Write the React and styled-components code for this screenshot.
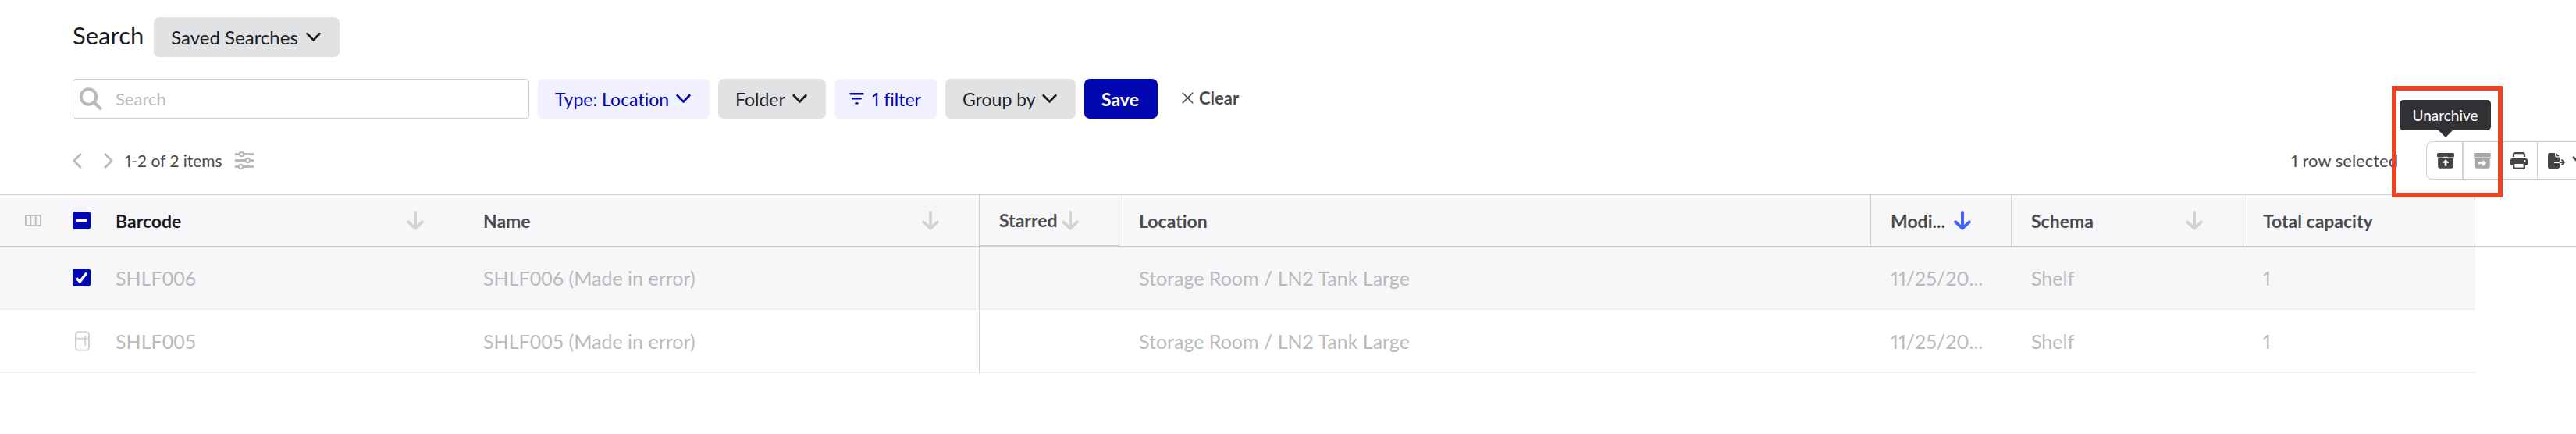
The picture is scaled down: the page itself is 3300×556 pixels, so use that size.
import React, { useState } from "react";
import styled, { createGlobalStyle } from "styled-components";

const GlobalStyle = createGlobalStyle`
  *, *::before, *::after { box-sizing: border-box; }
  body {
    margin: 0;
    background: #fff;
    color: #4a4b4d;
    font-family: Lato, "Open Sans", sans-serif;
    font-variant-ligatures: none;
    font-variant-numeric: proportional-nums;
  }
  button, input { font: inherit; font-variant-ligatures: none; font-variant-numeric: proportional-nums; }
  svg { flex: none; }
`;

const Page = styled.main`
  overflow: hidden;
  padding-bottom: 78px;
`;

const Controls = styled.div`
  display: flex;
  flex-direction: column;
  gap: 28px;
  padding: 22px 0 18px 93px;
`;

const Bar = styled.div`
  display: flex;
  align-items: center;
  height: 51px;
  gap: ${(p) => p.$gap || 11}px;
`;

const Title = styled.h1`
  margin: 0;
  padding-bottom: 6px;
  color: #1b1c1f;
  font-size: 31px;
  font-weight: 400;
  line-height: 36px;
`;

const tones = {
  grey: ["#e1e2e4", "#1b1c1f"],
  tint: ["#f0f0fe", "#0006b0"],
  primary: ["#0006b0", "#ffffff"],
};

const Button = styled.button`
  display: flex;
  align-items: center;
  justify-content: space-between;
  flex: none;
  width: ${(p) => p.$width}px;
  height: 51px;
  padding: 0 ${(p) => p.$end || 24}px 0 ${(p) => p.$start || 22}px;
  border: 0;
  border-radius: 7px;
  background: ${(p) => tones[p.$tone][0]};
  color: ${(p) => tones[p.$tone][1]};
  font-size: ${(p) => p.$size || 23}px;
  font-weight: ${(p) => (p.$tone === "primary" ? 700 : 400)};
  white-space: nowrap;
  cursor: pointer;
`;

const SearchField = styled.label`
  display: flex;
  align-items: center;
  gap: 17px;
  width: 585px;
  height: 51px;
  padding: 0 7px;
  border: 1px solid #cfcfd1;
  border-radius: 4px;
`;

const SearchInput = styled.input`
  flex: 1;
  min-width: 0;
  padding: 0;
  border: 0;
  outline: 0;
  background: transparent;
  font-size: 22px;
  &::placeholder { color: #b9babc; opacity: 1; }
`;

const ClearButton = styled.button`
  display: flex;
  align-items: center;
  gap: 7px;
  margin-left: 20px;
  padding: 0 0 2px;
  border: 0;
  background: none;
  color: #4a4b4d;
  font-size: 22px;
  font-weight: 700;
  cursor: pointer;
`;

const IconButton = styled.button`
  display: flex;
  padding: 0;
  border: 0;
  background: none;
  cursor: pointer;
`;

const Pager = styled.div`
  display: flex;
  align-items: center;
  gap: 28px;
`;

const Count = styled.span`
  font-size: ${(p) => (p.$large ? 22 : 21)}px;
  white-space: nowrap;
`;

const Selection = styled.div`
  display: flex;
  align-items: center;
  gap: 36px;
  margin: 0 -25px 0 auto;
`;

const Actions = styled.div`
  position: relative;
  display: flex;
  height: 51px;
  padding: 1px 0;
`;

const Action = styled.button`
  display: flex;
  align-items: center;
  justify-content: flex-start;
  gap: 9px;
  width: ${(p) => (p.$wide ? 75 : p.$first ? 48 : 47)}px;
  padding: 0 0 0 13px;
  border: 1px solid #cfcfd1;
  border-left-width: ${(p) => (p.$first || p.$wide ? 1 : 0)}px;
  border-right-width: ${(p) => (p.$first ? 2 : p.$wide ? 1 : 0)}px;
  border-radius: ${(p) => (p.$first ? "8px 0 0 8px" : p.$wide ? "0 8px 8px 0" : "0")};
  background: #fff;
  color: ${(p) => (p.disabled ? "#a7a7aa" : "#454547")};
  cursor: pointer;
`;

const Highlight = styled.div`
  position: absolute;
  top: -70px;
  left: -44px;
  width: 142px;
  height: 143px;
  border: 6px solid #ea4424;
  pointer-events: none;
`;

const Tooltip = styled.div`
  position: absolute;
  top: -52px;
  left: -34px;
  width: 117px;
  border-radius: 5px;
  background: #313136;
  color: #fff;
  font-size: 19px;
  line-height: 39px;
  text-align: center;
  &::after {
    content: "";
    position: absolute;
    top: 100%;
    left: 50%;
    margin-left: -9px;
    border: 9px solid transparent;
    border-top-color: #313136;
    border-bottom-width: 0;
  }
`;

const TableArea = styled.div`
  display: flex;
  align-items: flex-start;
`;

const HeaderRest = styled.div`
  width: 129px;
  height: 67px;
  border-bottom: 1px solid #cfcfd1;
`;

const Table = styled.table`
  flex: 1;
  width: 0;
  table-layout: fixed;
  border-collapse: separate;
  border-spacing: 0;
`;

const Col = styled.col`
  width: ${(p) => (p.$width ? `${p.$width}px` : "auto")};
`;

const HeadCell = styled.th`
  height: 67px;
  padding: 0 ${(p) => (p.$tight ? 0 : 51)}px 0 ${(p) => (p.$tight ? p.$inset : 25)}px;
  border: 0 solid #cfcfd1;
  border-width: 1px ${(p) => (p.$divider ? 1 : 0)}px ${(p) => (p.$heavy ? 2 : 1)}px 0;
  background: #f7f7fa;
  color: ${(p) => (p.$dark ? "#1b1c1f" : "#4a4b4d")};
  font-size: 23px;
  font-weight: 700;
  text-align: left;
  white-space: nowrap;
`;

const HeadContent = styled.div`
  display: flex;
  align-items: center;
  justify-content: space-between;
`;

const Cell = styled.td`
  height: 81px;
  padding: 0 ${(p) => (p.$tight ? 0 : 24)}px 0 ${(p) => (p.$tight ? p.$inset : 25)}px;
  border: 0 solid #f0f0f2;
  border-bottom-width: 2px;
  ${(p) => p.$divider && "border-right: 1px solid #cfcfd1;"}
  background: ${(p) => (p.$selected ? "#f7f7fa" : "#fff")};
  color: #b9babc;
  font-size: 25px;
  font-variant-numeric: ${(p) => (p.$code ? "tabular-nums" : "proportional-nums")};
  overflow: hidden;
  white-space: nowrap;
`;

const CheckLabel = styled.label`
  position: relative;
  display: block;
  width: 23px;
  height: 23px;
  svg { position: absolute; inset: 0; pointer-events: none; }
`;

const Check = styled.input`
  appearance: none;
  display: block;
  width: 23px;
  height: 23px;
  margin: 0;
  border: 1px solid #0006b0;
  border-radius: 3px;
  background: #0006b0;
`;

const Chevron = () => (
  <svg width="19" height="13" viewBox="0 0 19 13" fill="none" stroke="currentColor" strokeWidth="2.8" strokeLinecap="round" strokeLinejoin="round">
    <path d="M1.7 2.2 9.5 10.4 17.3 2.2" />
  </svg>
);

const Magnifier = () => (
  <svg width="30" height="30" viewBox="0 0 30 30" fill="none" stroke="#b9babc" strokeWidth="4">
    <circle cx="12.5" cy="12" r="9.8" />
    <path d="m19.5 19 8 8" strokeLinecap="round" />
  </svg>
);

const FilterIcon = () => (
  <svg width="19" height="17" viewBox="0 0 19 17" fill="none" stroke="currentColor" strokeWidth="2.4" strokeLinecap="round">
    <path d="M1.5 2.2h16M4.2 8.2h10.6M8.4 14.4h2.2" />
  </svg>
);

const Cross = () => (
  <svg width="15" height="15" viewBox="0 0 15 15" fill="none" stroke="currentColor" strokeWidth="1.6" strokeLinecap="round">
    <path d="m1.2 1.2 12.6 12.6M13.8 1.2 1.2 13.8" />
  </svg>
);

const PageArrow = ({ next }) => (
  <svg width="12" height="20" viewBox="0 0 12 20" fill="none" stroke="#b9babc" strokeWidth="2.8" strokeLinecap="round" strokeLinejoin="round">
    <path d={next ? "M2 1.8 10.2 10 2 18.2" : "M10 1.8 1.8 10 10 18.2"} />
  </svg>
);

const Sliders = () => (
  <svg width="26" height="25" viewBox="0 0 26 25" stroke="#b9babc" strokeWidth="3" strokeLinecap="round">
    <path d="M2 4.5h22M2 12.5h22M2 20.5h22" />
    <g fill="#fff" strokeWidth="2.2">
      <circle cx="9.5" cy="4.5" r="2.7" />
      <circle cx="17.5" cy="12.5" r="2.7" />
      <circle cx="8.5" cy="20.5" r="2.7" />
    </g>
  </svg>
);

const SortArrow = ({ active }) => (
  <svg width="22" height="25" viewBox="0 0 22 25" fill="none" stroke={active ? "#4262ff" : "#d3d3d5"} strokeWidth="4" strokeLinecap="round" strokeLinejoin="round">
    <path d="M11 2v20M2.2 14.4 11 22.6l8.8-8.2" />
  </svg>
);

const ColumnsIcon = () => (
  <svg width="21" height="15" viewBox="0 0 21 15" fill="none" stroke="#b9babc" strokeWidth="1.8">
    <rect x="0.9" y="0.9" width="19.2" height="13.2" rx="1" />
    <path d="M7.3 1v13M13.7 1v13" />
  </svg>
);

const Fridge = () => (
  <svg width="19" height="26" viewBox="0 0 19 26" fill="none" stroke="#d3d3d5" strokeWidth="2" strokeLinecap="round">
    <rect x="1" y="1.2" width="17" height="23.6" rx="3.5" />
    <path d="M1.5 9.8h16M13.2 6.5v11.5" />
  </svg>
);

const Archive = ({ right }) => (
  <svg width="22" height="20" viewBox="0 0 22 20" fill="currentColor">
    <rect width="22" height="5.6" rx="1.6" />
    <path d="M1.2 7h19.6v9.8a3 3 0 0 1-3 3H4.2a3 3 0 0 1-3-3z" />
    {!right && <path d="M8.3 4.8h5.4v1H8.3z" fill="#fff" />}
    {right ? (
      <path d="M5.8 12h5.6V9l5 4.1-5 4.1v-3H5.8z" fill="#fff" />
    ) : (
      <path d="M11 8.2 15.5 12.8h-3.1v4H9.6v-4H6.5z" fill="#fff" />
    )}
  </svg>
);

const Printer = () => (
  <svg width="22" height="22" viewBox="0 0 22 22" fill="none">
    <path d="M4 6V3.2C4 1.8 4.8 1.2 6 1.2h10c1.2 0 2 .6 2 2V6" stroke="currentColor" strokeWidth="2.2" />
    <path d="M3 7.8h16a3 3 0 0 1 3 3V15a2 2 0 0 1-2 2h-1v2.5A2.5 2.5 0 0 1 16.5 22h-11A2.5 2.5 0 0 1 3 19.5V17H2a2 2 0 0 1-2-2v-4.200a3 3 0 0 1 3-3z" fill="currentColor" />
    <path d="M5.4 15h11.2v4.6H5.4z" fill="#fff" />
    <circle cx="18.3" cy="11.2" r="1.2" fill="#fff" />
  </svg>
);

const Export = () => (
  <svg width="22" height="20" viewBox="0 0 22 20" fill="none">
    <path d="M2.5 0H9v3.5A2 2 0 0 0 11 5.5h4v12a2.5 2.5 0 0 1-2.5 2.5h-10A2.5 2.5 0 0 1 0 17.5v-15A2.5 2.5 0 0 1 2.5 0z" fill="currentColor" />
    <path d="M10.5 0 15 4.3h-4.5z" fill="currentColor" />
    <path d="M8 12h7" stroke="#fff" strokeWidth="2" />
    <path d="M15 12h5.8M17.4 8.6l3.5 3.4-3.5 3.4" stroke="currentColor" strokeWidth="1.9" />
  </svg>
);

const MenuChevron = () => (
  <svg width="19" height="13" viewBox="0 0 19 13" fill="none" stroke="currentColor" strokeWidth="2.8">
    <path d="m1 2 8.5 8L18 2" />
  </svg>
);

function HeadLabel({ children, sort }) {
  return (
    <HeadContent>
      <span>{children}</span>
      {sort && <SortArrow active={sort === "active"} />}
    </HeadContent>
  );
}

const rows = [
  { barcode: "SHLF006", selected: true },
  { barcode: "SHLF005", selected: false },
];

export default function App() {
  const [selected, setSelected] = useState(true);
  return (
    <>
      <GlobalStyle />
      <Page>
        <Controls>
          <Bar $gap={13}>
            <Title>Search</Title>
            <Button $tone="grey" $width={238} $size={24}>Saved Searches <Chevron /></Button>
          </Bar>
          <Bar>
            <SearchField>
              <Magnifier />
              <SearchInput type="text" placeholder="Search" aria-label="Search" />
            </SearchField>
            <Button $tone="tint" $width={220}>Type: Location <Chevron /></Button>
            <Button $tone="grey" $width={138}>Folder <Chevron /></Button>
            <Button $tone="tint" $width={131} $start={19} $end={20}><FilterIcon /> 1 filter</Button>
            <Button $tone="grey" $width={167}>Group by <Chevron /></Button>
            <Button $tone="primary" $width={94} $end={22}>Save</Button>
            <ClearButton><Cross /> Clear</ClearButton>
          </Bar>
          <Bar $gap={15}>
            <Pager>
              <IconButton aria-label="Previous page"><PageArrow /></IconButton>
              <IconButton aria-label="Next page"><PageArrow next /></IconButton>
            </Pager>
            <Count>1-2 of 2 items</Count>
            <IconButton aria-label="Display settings"><Sliders /></IconButton>
            <Selection>
              <Count $large>1 row selected</Count>
              <Actions>
                <Action $first aria-label="Unarchive"><Archive /></Action>
                <Action disabled aria-label="Move"><Archive right /></Action>
                <Action aria-label="Print"><Printer /></Action>
                <Action $wide aria-label="Export"><Export /><MenuChevron /></Action>
                <Tooltip role="tooltip">Unarchive</Tooltip>
                <Highlight />
              </Actions>
            </Selection>
          </Bar>
        </Controls>
        <TableArea>
          <Table>
            <colgroup>
              <Col $width={76} />
              <Col $width={47} />
              <Col $width={471} />
              <Col $width={661} />
              <Col $width={179} />
              <Col />
              <Col $width={180} />
              <Col $width={297} />
              <Col $width={297} />
            </colgroup>
            <thead>
              <tr>
                <HeadCell $tight $inset={32}><IconButton aria-label="Choose columns"><ColumnsIcon /></IconButton></HeadCell>
                <HeadCell $tight $inset={17}>
                  <CheckLabel>
                    <Check type="checkbox" aria-label="Select all rows" />
                    <svg viewBox="0 0 23 23"><path d="M6 11.5h11" stroke="#fff" strokeWidth="3.6" strokeLinecap="round" /></svg>
                  </CheckLabel>
                </HeadCell>
                <HeadCell $dark><HeadLabel sort="idle">Barcode</HeadLabel></HeadCell>
                <HeadCell $divider><HeadLabel sort="idle">Name</HeadLabel></HeadCell>
                <HeadCell $divider $heavy><HeadLabel sort="idle">Starred</HeadLabel></HeadCell>
                <HeadCell $divider><HeadLabel>Location</HeadLabel></HeadCell>
                <HeadCell $divider><HeadLabel sort="active">Modi...</HeadLabel></HeadCell>
                <HeadCell $divider><HeadLabel sort="idle">Schema</HeadLabel></HeadCell>
                <HeadCell $divider><HeadLabel>Total capacity</HeadLabel></HeadCell>
              </tr>
            </thead>
            <tbody>
              {rows.map((r) => (
                <tr key={r.barcode}>
                  <Cell $selected={r.selected} />
                  <Cell $selected={r.selected} $tight $inset={r.selected ? 17 : 20}>
                    {r.selected ? (
                      <CheckLabel>
                        <Check
                          type="checkbox"
                          aria-label={`Select ${r.barcode}`}
                          checked={selected}
                          onChange={(e) => setSelected(e.target.checked)}
                        />
                        <svg viewBox="0 0 23 23" fill="none"><path d="m5 12.3 4.3 4.6L18 5.8" stroke="#fff" strokeWidth="3.4" /></svg>
                      </CheckLabel>
                    ) : (
                      <HeadContent><Fridge /></HeadContent>
                    )}
                  </Cell>
                  <Cell $code $selected={r.selected}>{r.barcode}</Cell>
                  <Cell $code $selected={r.selected} $divider>{r.barcode} (Made in error)</Cell>
                  <Cell $selected={r.selected} />
                  <Cell $selected={r.selected}>Storage Room / LN2 Tank Large</Cell>
                  <Cell $selected={r.selected}>11/25/20...</Cell>
                  <Cell $selected={r.selected}>Shelf</Cell>
                  <Cell $selected={r.selected}>1</Cell>
                </tr>
              ))}
            </tbody>
          </Table>
          <HeaderRest />
        </TableArea>
      </Page>
    </>
  );
}
